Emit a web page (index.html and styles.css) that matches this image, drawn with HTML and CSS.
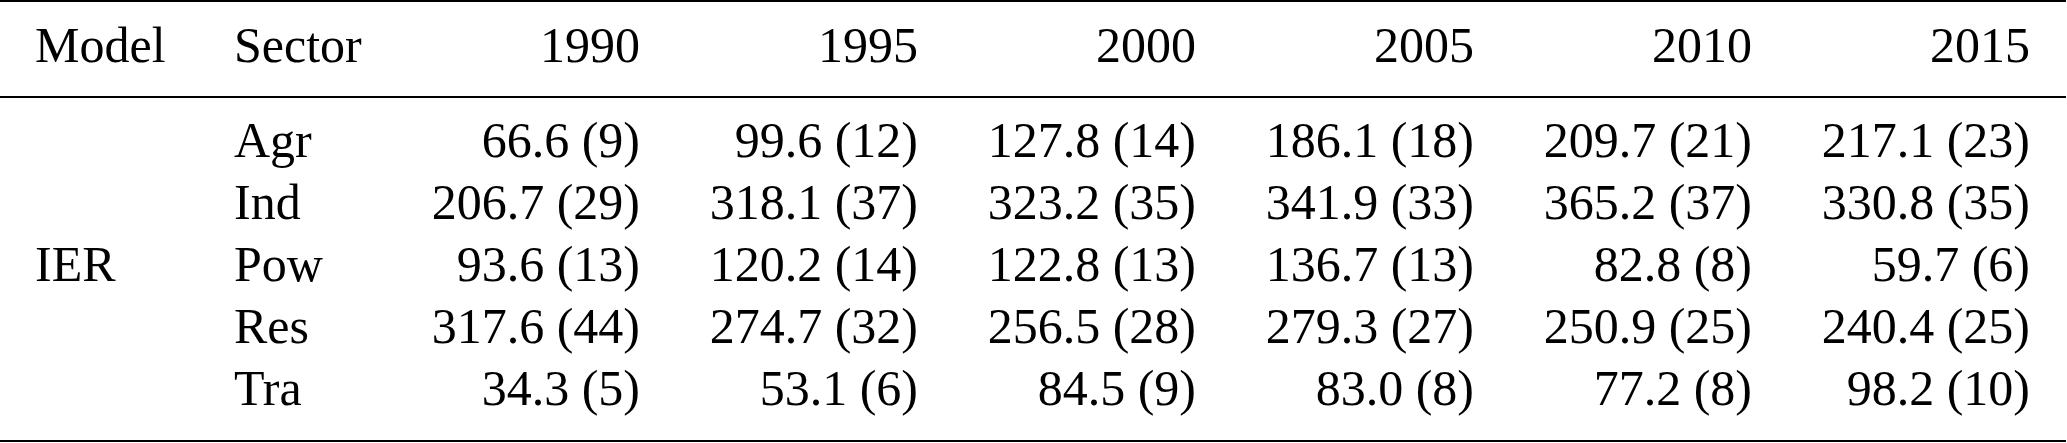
FILE: index.html
```html
<!DOCTYPE html>
<html lang="en">
<head>
  <meta charset="UTF-8">
  <title>IER emissions by sector</title>
  <link rel="stylesheet" href="styles.css">
</head>
<body>
  <table class="emissions">
    <colgroup>
      <col class="col-label">
      <col class="col-label">
      <col class="col-year">
      <col class="col-year">
      <col class="col-year">
      <col class="col-year">
      <col class="col-year">
      <col class="col-year">
    </colgroup>
    <thead>
      <tr>
        <th class="txt">Model</th>
        <th class="txt">Sector</th>
        <th>1990</th>
        <th>1995</th>
        <th>2000</th>
        <th>2005</th>
        <th>2010</th>
        <th>2015</th>
      </tr>
    </thead>
    <tbody>
      <tr>
        <td class="txt model" rowspan="5">IER</td>
        <td class="txt">Agr</td>
        <td>66.6 (9)</td>
        <td>99.6 (12)</td>
        <td>127.8 (14)</td>
        <td>186.1 (18)</td>
        <td>209.7 (21)</td>
        <td>217.1 (23)</td>
      </tr>
      <tr>
        <td class="txt">Ind</td>
        <td>206.7 (29)</td>
        <td>318.1 (37)</td>
        <td>323.2 (35)</td>
        <td>341.9 (33)</td>
        <td>365.2 (37)</td>
        <td>330.8 (35)</td>
      </tr>
      <tr>
        <td class="txt">Pow</td>
        <td>93.6 (13)</td>
        <td>120.2 (14)</td>
        <td>122.8 (13)</td>
        <td>136.7 (13)</td>
        <td>82.8 (8)</td>
        <td>59.7 (6)</td>
      </tr>
      <tr>
        <td class="txt">Res</td>
        <td>317.6 (44)</td>
        <td>274.7 (32)</td>
        <td>256.5 (28)</td>
        <td>279.3 (27)</td>
        <td>250.9 (25)</td>
        <td>240.4 (25)</td>
      </tr>
      <tr>
        <td class="txt">Tra</td>
        <td>34.3 (5)</td>
        <td>53.1 (6)</td>
        <td>84.5 (9)</td>
        <td>83.0 (8)</td>
        <td>77.2 (8)</td>
        <td>98.2 (10)</td>
      </tr>
    </tbody>
  </table>
</body>
</html>
```

FILE: styles.css
```css
* {
  padding: 0;
  margin: 0;
}
body {
  background: #fff;
  color: #000;
  font-family: "Liberation Serif", "Times New Roman", serif;
}

.emissions {
  width: 2066px;
  table-layout: fixed;
  border-collapse: separate;
  border-spacing: 0;
  font-size: 50px;
  line-height: 62px;
}
.col-label {
  width: 199px;
}
.col-year {
  width: 278px;
}

.emissions th,
.emissions td {
  font-weight: normal;
  text-align: right;
  padding-right: 36px;
  white-space: nowrap;
}
.emissions .txt {
  text-align: left;
  padding-left: 35px;
  padding-right: 0;
}

/* booktabs style rules */
.emissions th {
  border-top: 2px solid #000;
  border-bottom: 2px solid #000;
  padding-top: 12px;
  padding-bottom: 20px;
}
.emissions tbody tr:first-child td {
  padding-top: 11px;
}
.emissions tbody tr:last-child td {
  padding-bottom: 21px;
  border-bottom: 2px solid #000;
}
.emissions td.model {
  vertical-align: middle;
  padding-top: 11px;
  padding-bottom: 21px;
  border-bottom: 2px solid #000;
}
```
